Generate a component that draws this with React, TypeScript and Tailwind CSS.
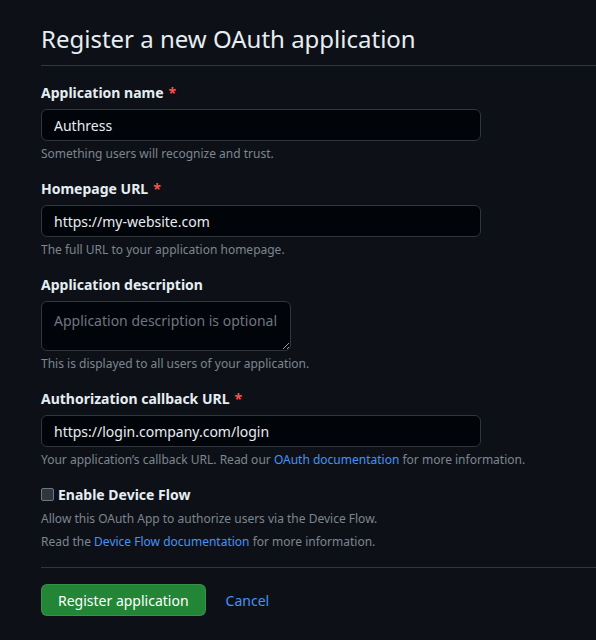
import React from "react";

function Field({ label, required, children, note }: { label: string; required?: boolean; children: React.ReactNode; note: React.ReactNode }) {
  return (
    <div className="flex flex-col">
      <label className="text-[14px] font-bold leading-[21px] text-[#e6edf3] mb-[6px]">
        {label}
        {required && <span className="text-[#f85149] ml-[5px]">*</span>}
      </label>
      {children}
      <p className="mt-[4px] text-[12px] leading-[18px] text-[#7d8590]">{note}</p>
    </div>
  );
}

function TextInput({ value }: { value: string }) {
  return (
    <input
      readOnly
      value={value}
      className="w-[440px] h-[32px] px-[12px] rounded-[6px] border border-[#30363d] bg-[#010409] text-[14px] text-[#e6edf3] outline-none"
    />
  );
}

export default function App() {
  return (
    <div className="min-h-[640px] w-full bg-[#0d1117] pl-[41px] pt-[21px] font-['Noto_Sans',sans-serif]">
      <div className="pb-[8px] border-b border-[#30363d] mb-[16px]">
        <h2 className="text-[24px] leading-[36px] font-normal text-[#e6edf3]">Register a new OAuth application</h2>
      </div>
      <div className="flex flex-col gap-[15px]">
        <Field label="Application name" required note="Something users will recognize and trust.">
          <TextInput value="Authress" />
        </Field>
        <Field label="Homepage URL" required note="The full URL to your application homepage.">
          <TextInput value="https://my-website.com" />
        </Field>
        <Field label="Application description" note="This is displayed to all users of your application.">
          <textarea
            readOnly
            placeholder="Application description is optional"
            className="w-[250px] h-[50px] px-[12px] py-[8px] rounded-[6px] border border-[#30363d] bg-[#010409] text-[14px] leading-[21px] text-[#e6edf3] placeholder:text-[#6e7681] outline-none resize-y"
          />
        </Field>
        <Field
          label="Authorization callback URL"
          required
          note={
            <>
              Your application’s callback URL. Read our <span className="text-[#4493f8]">OAuth documentation</span> for more information.
            </>
          }
        >
          <TextInput value="https://login.company.com/login" />
        </Field>
        <div className="flex flex-col">
          <label className="flex items-center gap-[4px] text-[14px] font-bold leading-[21px] text-[#e6edf3]">
            <span className="w-[13px] h-[13px] rounded-[2px] border border-[#6e7681] bg-[#30363d]" />
            Enable Device Flow
          </label>
          <p className="mt-[5px] text-[12px] leading-[18px] text-[#7d8590]">Allow this OAuth App to authorize users via the Device Flow.</p>
          <p className="mt-[5px] text-[12px] leading-[18px] text-[#7d8590]">
            Read the <span className="text-[#4493f8]">Device Flow documentation</span> for more information.
          </p>
        </div>
      </div>
      <div className="border-t border-[#30363d] mt-[16px] pt-[16px] flex items-center gap-[20px]">
        <button className="h-[32px] px-[16px] rounded-[6px] bg-[#238636] border border-[rgba(240,246,252,0.1)] text-[14px] font-normal text-white">
          Register application
        </button>
        <span className="text-[14px] text-[#4493f8]">Cancel</span>
      </div>
    </div>
  );
}
